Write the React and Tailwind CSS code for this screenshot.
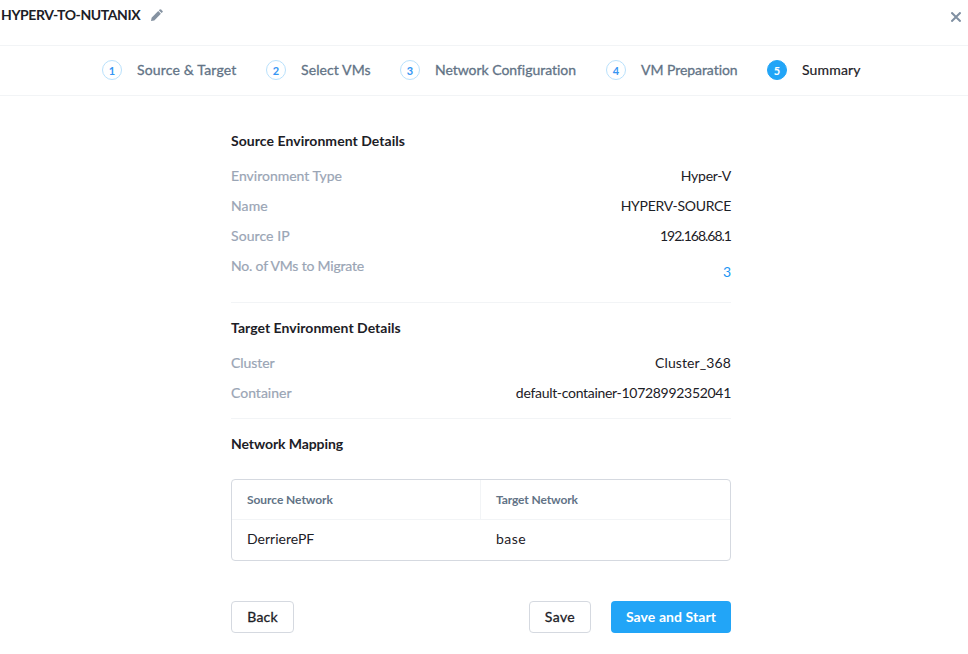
const steps = [
  { n: 1, label: "Source & Target", width: "w-[99px]", track: "tracking-[0.17px]" },
  { n: 2, label: "Select VMs", width: "w-[69px]", track: "tracking-[0.1px]" },
  { n: 3, label: "Network Configuration", width: "w-[141px]", track: "tracking-[-0.03px]" },
  { n: 4, label: "VM Preparation", width: "w-[96px]", track: "tracking-[-0.05px]" },
  { n: 5, label: "Summary", width: "w-[60px]", track: "tracking-[0.17px]", active: true },
];

const source = [
  { label: "Environment Type", lt: "tracking-[0px]", value: "Hyper-V", vt: "tracking-[-0.27px]" },
  { label: "Name", lt: "tracking-[0.1px]", value: "HYPERV-SOURCE", vt: "tracking-[-0.27px]" },
  { label: "Source IP", lt: "tracking-[0.09px]", value: "192.168.68.1", vt: "tracking-[-1px] pr-px -mr-px" },
];

const target = [
  { label: "Cluster", lt: "tracking-[-0.05px]", value: "Cluster_368", vt: "tracking-[0.11px]" },
  { label: "Container", lt: "tracking-[0px]", value: "default-container-10728992352041", vt: "tracking-[-0.3px]" },
];

function Row({ label, lt, value, vt }) {
  return (
    <div className="flex h-[30px] items-center justify-between">
      <span className={`text-[#9aa5b5] [-webkit-text-stroke:0.2px_#9aa5b5] ${lt}`}>{label}</span>
      <span className={vt}>{value}</span>
    </div>
  );
}

function Pencil() {
  return (
    <svg width="12" height="12" viewBox="0 0 12 12" fill="#8592a1">
      <path d="M0 12 .6 8.7 7.2 2.1 9.9 4.8 3.3 11.4Z" />
      <path d="M7.9 1.4 8.9.4Q9.4 0 9.9.4L11.6 2.1Q12 2.6 11.6 3.1L10.6 4.1Z" />
    </svg>
  );
}

export default function App() {
  return (
    <div className="h-[654px] bg-white font-['Lato',sans-serif] text-sm leading-5 text-[#1c2026]">
      <header className="flex h-[46px] items-start justify-between border-b border-[#f2f4f6] pr-[7px] pl-px">
        <div className="flex items-center gap-[10px] pt-[5px]">
          <h1 className="w-[140px] text-sm font-bold leading-5 tracking-[-0.41px] whitespace-nowrap">HYPERV-TO-NUTANIX</h1>
          <Pencil />
        </div>
        <button className="mt-3" aria-label="Close">
          <svg width="10" height="10" viewBox="0 0 10 10" stroke="#8090a2" strokeWidth="2">
            <path d="M.4.4 9.6 9.6M9.6.4.4 9.6" />
          </svg>
        </button>
      </header>

      <nav className="flex h-[50px] items-center gap-[30px] border-b border-[#f2f4f6] pb-px pl-[102px]">
        {steps.map((s) => (
          <div key={s.n} className="flex items-center gap-[15px]">
            <span
              className={`flex size-5 items-center justify-center rounded-full border text-[11px] font-bold leading-none ${
                s.active ? "border-[#22a5f7] bg-[#22a5f7] text-white" : "border-[#b9e1fc] text-[#3595f3]"
              }`}
            >
              {s.n}
            </span>
            <span
              className={`whitespace-nowrap ${s.width} ${s.track} ${
                s.active ? "[-webkit-text-stroke:0.2px_#1c2026]" : "text-[#627386] [-webkit-text-stroke:0.3px_#627386]"
              }`}
            >
              {s.label}
            </span>
          </div>
        ))}
      </nav>

      <main className="ml-[231px] w-[500px] pt-[35px]">
        <section className="h-[172px] border-b border-[#f2f4f6]">
          <h2 className="mb-[10px] font-bold tracking-[0.05px]">Source Environment Details</h2>
          {source.map((r) => (
            <Row key={r.label} {...r} />
          ))}
          <div className="flex justify-between pt-[5px]">
            <span className="tracking-[-0.19px] text-[#9aa5b5] [-webkit-text-stroke:0.2px_#9aa5b5]">No. of VMs to Migrate</span>
            <a className="pt-[6px] text-[#2196f3]">3</a>
          </div>
        </section>

        <section className="h-[116px] border-b border-[#f2f4f6] pt-[15px]">
          <h2 className="mb-[10px] font-bold tracking-[0.03px]">Target Environment Details</h2>
          {target.map((r) => (
            <Row key={r.label} {...r} />
          ))}
        </section>

        <section className="pt-[15px]">
          <h2 className="font-bold tracking-[-0.09px]">Network Mapping</h2>
          <div className="mt-[25px] h-[82px] rounded border border-[#d5d9e0]">
            <div className="grid h-10 grid-cols-2 border-b border-[#f2f4f6] text-xs font-bold text-[#627386]">
              <div className="flex items-center border-r border-[#f2f4f6] pl-[15px] tracking-[-0.06px]">Source Network</div>
              <div className="flex items-center pl-[15px] tracking-[-0.12px]">Target Network</div>
            </div>
            <div className="grid h-[38px] grid-cols-2">
              <div className="flex items-center pl-[15px]">DerrierePF</div>
              <div className="flex items-center pl-[15px] tracking-[0.44px]">base</div>
            </div>
          </div>
        </section>

        <div className="mt-10 flex">
          <button className="h-8 w-[63px] rounded border border-[#d5d9e0] tracking-[0.2px] [-webkit-text-stroke:0.3px_#1c2026]">Back</button>
          <button className="ml-auto h-8 w-[62px] rounded border border-[#d5d9e0] tracking-[0.4px] [-webkit-text-stroke:0.3px_#1c2026]">Save</button>
          <button className="ml-5 h-8 w-[120px] rounded bg-[#22a5f7] font-bold tracking-[0.08px] text-white">Save and Start</button>
        </div>
      </main>
    </div>
  );
}
